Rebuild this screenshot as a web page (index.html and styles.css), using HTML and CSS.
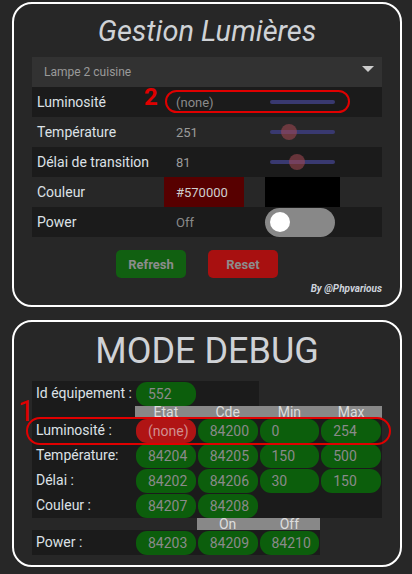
FILE: index.html
```html
<!DOCTYPE html>
<html lang="fr">
<head>
<meta charset="utf-8">
<title>Gestion Lumières</title>
<link rel="stylesheet" href="styles.css">
</head>
<body>
<div class="wrap">
  <section class="card card-main">
    <h1 class="title">Gestion Lumières</h1>
    <div class="select">
      <span>Lampe 2 cuisine</span>
      <span class="caret"></span>
    </div>
    <div class="row dark">
      <div class="lbl">Luminosité</div>
      <div class="val muted">(none)</div>
      <div class="ctl"><div class="slider"><div class="track"></div></div></div>
    </div>
    <div class="row">
      <div class="lbl">Température</div>
      <div class="val">251</div>
      <div class="ctl"><div class="slider"><div class="track"></div><div class="thumb" style="left:16px"></div></div></div>
    </div>
    <div class="row dark">
      <div class="lbl">Délai de transition</div>
      <div class="val">81</div>
      <div class="ctl"><div class="slider"><div class="track"></div><div class="thumb" style="left:24px"></div></div></div>
    </div>
    <div class="row">
      <div class="lbl">Couleur</div>
      <div class="val color-val">#570000</div>
      <div class="ctl"><div class="swatch"></div></div>
    </div>
    <div class="row dark">
      <div class="lbl">Power</div>
      <div class="val muted">Off</div>
      <div class="ctl"><div class="toggle"><div class="knob"></div></div></div>
    </div>
    <div class="buttons">
      <button class="btn btn-green">Refresh</button>
      <button class="btn btn-red">Reset</button>
    </div>
    <div class="credit">By @Phpvarious</div>
    <div class="mark mark-2">2</div>
    <div class="ring ring-2"></div>
  </section>

  <section class="card card-debug">
    <h2 class="dtitle">MODE DEBUG</h2>
    <div class="drow bg-dark cols2">
      <div class="dlbl">Id équipement :</div>
      <div class="pill">552</div>
      <div></div>
    </div>
    <div class="drow head cols4">
      <div class="bg-dark"></div>
      <div class="hcell">Etat</div>
      <div class="hcell">Cde</div>
      <div class="hcell">Min</div>
      <div class="hcell">Max</div>
    </div>
    <div class="drow bg-dark cols4">
      <div class="dlbl">Luminosité :</div>
      <div class="pill pill-red">(none)</div>
      <div class="pill">84200</div>
      <div class="pill">0</div>
      <div class="pill">254</div>
    </div>
    <div class="drow bg-dark cols4">
      <div class="dlbl">Température:</div>
      <div class="pill">84204</div>
      <div class="pill">84205</div>
      <div class="pill">150</div>
      <div class="pill">500</div>
    </div>
    <div class="drow bg-dark cols4">
      <div class="dlbl">Délai :</div>
      <div class="pill">84202</div>
      <div class="pill">84206</div>
      <div class="pill">30</div>
      <div class="pill">150</div>
    </div>
    <div class="drow bg-dark cols4">
      <div class="dlbl">Couleur :</div>
      <div class="pill">84207</div>
      <div class="pill">84208</div>
      <div></div>
      <div></div>
    </div>
    <div class="drow head cols3">
      <div></div>
      <div></div>
      <div class="hcell">On</div>
      <div class="hcell">Off</div>
    </div>
    <div class="drow bg-dark cols3">
      <div class="dlbl">Power :</div>
      <div class="pill">84203</div>
      <div class="pill">84209</div>
      <div class="pill">84210</div>
    </div>
    <div class="mark mark-1">1</div>
    <div class="ring ring-1"></div>
  </section>
</div>
</body>
</html>
```

FILE: styles.css
```css
* { box-sizing: border-box; }
html, body { margin: 0; padding: 0; }
body {
  background: #272727;
  font-family: Roboto, "Liberation Sans", Arial, sans-serif;
  color: #dcdcdc;
}
.wrap {
  padding: 2px 10px 0 12px;
  width: 412px;
}
.card {
  position: relative;
  width: 390px;
  border: 2px solid #ffffff;
  border-radius: 20px;
  padding: 0 18px;
}
.card-main { padding-bottom: 10px; }
.card-debug { margin-top: 13px; padding-bottom: 10px; }

.title {
  margin: 0;
  height: 53px;
  line-height: 55px;
  text-align: center;
  font-size: 29px;
  font-style: italic;
  font-weight: 400;
  color: #cfd2d6;
}
.select {
  height: 30px;
  background: #323232;
  display: flex;
  align-items: center;
  justify-content: space-between;
  padding: 0 8px 0 12px;
  font-size: 12px;
  color: #9a9a9a;
}
.caret {
  width: 0; height: 0;
  border-left: 6px solid transparent;
  border-right: 6px solid transparent;
  border-top: 6px solid #cccccc;
  margin-top: -6px;
}
.row {
  height: 30px;
  display: grid;
  grid-template-columns: 132px 80px 1fr;
  align-items: center;
}
.row.dark { background: #1b1b1b; }
.lbl {
  padding-left: 5px;
  font-size: 14px;
  color: #dde1e6;
}
.val {
  height: 100%;
  display: flex;
  align-items: center;
  padding-left: 12px;
  font-size: 13px;
  color: #9a9a9a;
}
.val.muted { color: #8a8a8a; }
.color-val { background: #570000; color: #cfcfcf; }
.ctl {
  height: 100%;
  display: flex;
  align-items: center;
  padding-left: 21px;
}
.slider {
  position: relative;
  width: 75px;
  height: 16px;
  display: flex;
  align-items: center;
  padding-left: 5px;
}
.track {
  width: 65px;
  height: 4px;
  border-radius: 2px;
  background: #393970;
}
.thumb {
  position: absolute;
  top: 0;
  width: 16px;
  height: 16px;
  border-radius: 50%;
  background: rgba(165, 72, 84, 0.55);
}
.swatch {
  width: 75px;
  height: 30px;
  background: #000000;
}
.toggle {
  width: 70px;
  height: 29px;
  border-radius: 15px;
  background: #888888;
  display: flex;
  align-items: center;
  padding-left: 5px;
}
.knob {
  width: 20px;
  height: 20px;
  border-radius: 50%;
  background: #ffffff;
}
.buttons {
  display: flex;
  gap: 22px;
  margin-top: 13px;
  padding-left: 84px;
}
.btn {
  width: 70px;
  height: 28px;
  border: 0;
  border-radius: 5px;
  font-family: Roboto, "Liberation Sans", Arial, sans-serif;
  font-weight: 700;
  font-size: 13px;
  color: #8c8c8c;
  padding: 0;
}
.btn-green { background: #116011; }
.btn-red { background: #a81010; }
.credit {
  margin-top: 5px;
  text-align: right;
  font-size: 10px;
  line-height: 12px;
  font-style: italic;
  font-weight: 700;
  color: #cdd3dc;
}

.mark {
  position: absolute;
  color: #e00000;
  font-family: Roboto, "Liberation Sans", Arial, sans-serif;
}
.mark-2 {
  left: 130px;
  top: 79px;
  font-size: 24px;
  font-weight: 700;
  line-height: 28px;
}
.ring {
  position: absolute;
  border: 2px solid #e00000;
}
.ring-2 {
  left: 151px;
  top: 86px;
  width: 185px;
  height: 23px;
  border-radius: 12px;
}

.dtitle {
  margin: 0;
  height: 59px;
  line-height: 59px;
  text-align: center;
  font-size: 36px;
  font-weight: 400;
  color: #cfd2d6;
}
.drow {
  display: grid;
  width: max-content;
  height: 25px;
  align-items: stretch;
}
.cols2 { grid-template-columns: 103px 61.75px 61.75px; }
.cols3 { grid-template-columns: 103px 61.75px 61.75px 61.75px; }
.cols4 { grid-template-columns: 103px 61.75px 61.75px 61.75px 61.75px; }
.bg-dark { background: #1b1b1b; }
.drow.head {
  height: 12px;
  overflow: hidden;
}
.hcell {
  background: #888888;
  color: #dddddd;
  text-align: center;
  font-size: 14px;
  line-height: 12px;
}
.dlbl {
  padding-left: 4px;
  font-size: 14px;
  line-height: 25px;
  color: #dde1e6;
}
.pill {
  margin: 0.5px 1px;
  border-radius: 11px;
  background: #0c5e0c;
  color: #8a8a8a;
  font-size: 14px;
  line-height: 24px;
  padding-left: 12px;
}
.pill-red { background: #b01414; color: #d09090; }

.mark-1 {
  left: 4px;
  top: 72px;
  font-size: 29px;
  line-height: 34px;
  font-weight: 400;
}
.ring-1 {
  left: 12px;
  top: 95px;
  width: 365px;
  height: 28px;
  border-radius: 14px;
}
```
